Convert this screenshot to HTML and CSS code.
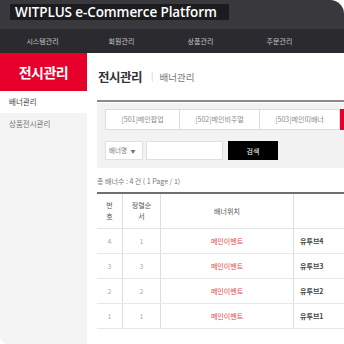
FILE: index.html
```html
<!DOCTYPE html>
<html>
<head>
  <meta charset="utf-8">
  <title>전시관리 - 배너관리</title>
  <link rel="stylesheet" href="styles.css">
</head>
<body>
<div class="frame">
  <div class="topbar">
    <div class="brand">WITPLUS e-Commerce Platform</div>
  </div>
  <div class="gnb">
    <a href="#">시스템관리</a>
    <a href="#">회원관리</a>
    <a href="#">상품관리</a>
    <a href="#">주문관리</a>
  </div>

  <div class="wrap">
    <div class="side">
      <div class="side-title">전시관리</div>
      <ul class="side-menu">
        <li class="on">배너관리</li>
        <li>상품전시관리</li>
      </ul>
    </div>

    <div class="main">
      <div class="page-title">
        <strong>전시관리</strong>
        <span class="bar">|</span>
        <span class="sub">배너관리</span>
      </div>

      <div class="search-box">
        <div class="tabs">
          <span class="tab">[501]메인팝업</span>
          <span class="tab">[502]메인비주얼</span>
          <span class="tab">[503]메인띠배너</span>
          <span class="tab red"></span>
        </div>
        <div class="search-row">
          <span class="select">배너명 <i>▼</i></span>
          <span class="input"></span>
          <button class="btn-search">검색</button>
        </div>
      </div>

      <div class="total">총 배너수 : 4 건 ( 1 Page / 1)</div>

      <table class="list">
        <thead>
          <tr>
            <th class="c1">번<br>호</th>
            <th class="c2">정렬순<br>서</th>
            <th class="c3">배너위치</th>
            <th class="c4"></th>
          </tr>
        </thead>
        <tbody>
          <tr><td>4</td><td>1</td><td class="pos">메인이벤트</td><td class="name">유투브4</td></tr>
          <tr><td>3</td><td>3</td><td class="pos">메인이벤트</td><td class="name">유투브3</td></tr>
          <tr><td>2</td><td>2</td><td class="pos">메인이벤트</td><td class="name">유투브2</td></tr>
          <tr><td>1</td><td>1</td><td class="pos">메인이벤트</td><td class="name">유투브1</td></tr>
        </tbody>
      </table>
    </div>
  </div>
</div>
</body>
</html>
```

FILE: styles.css
```css
html, body {
  margin: 0;
  padding: 0;
  background: #fff;
}

.frame {
  width: 344px;
  height: 344px;
  overflow: hidden;
  border-radius: 0 14px 0 8px;
  display: flex;
  flex-direction: column;
  font-family: "Noto Sans CJK KR", "Noto Sans", sans-serif;
}

.topbar {
  height: 29px;
  background: #38383d;
  padding: 4px 0 0 10px;
  box-sizing: border-box;
  flex: none;
}
.brand {
  width: 219px;
  height: 16px;
  background: #1c1c1e;
  color: #fff;
  font-family: "Open Sans", "Noto Sans", sans-serif;
  font-weight: 600;
  font-size: 13.5px;
  line-height: 16px;
  padding-left: 5px;
  box-sizing: border-box;
  letter-spacing: -0.1px;
}

.gnb {
  height: 24px;
  background: #2b2b2f;
  display: flex;
  align-items: center;
  padding-left: 3px;
  flex: none;
}
.gnb a {
  width: 79px;
  text-align: center;
  color: #c4c4c8;
  font-size: 7px;
  text-decoration: none;
}

.wrap {
  flex: 1;
  display: flex;
}

.side {
  width: 87px;
  flex: none;
  background: #f3f3f3;
}
.side-title {
  height: 38px;
  background: #e6002b;
  color: #fff;
  font-size: 14px;
  font-weight: bold;
  text-align: center;
  line-height: 38px;
  letter-spacing: -0.5px;
}
.side-menu {
  list-style: none;
  margin: 0;
  padding: 0;
}
.side-menu li {
  height: 22px;
  line-height: 22px;
  padding-left: 9px;
  font-size: 7.5px;
  color: #777;
}
.side-menu li.on {
  background: #fff;
  color: #444;
}

.main {
  margin-left: 10px;
  width: 330px;
  flex: none;
}

.page-title {
  height: 49px;
  display: flex;
  align-items: center;
  padding-left: 1px;
  border-bottom: 2px solid #8a8a8a;
  box-sizing: border-box;
}
.page-title strong {
  font-size: 12.5px;
  color: #333;
  letter-spacing: -0.5px;
}
.page-title .bar {
  color: #ccc;
  font-size: 9px;
  margin: 0 6px 0 9px;
}
.page-title .sub {
  font-size: 9.5px;
  color: #777;
}

.search-box {
  margin-top: 1px;
  background: #f2f2f2;
  padding: 6px 0 8px 8px;
}
.tabs {
  display: flex;
}
.tab {
  width: 80px;
  height: 21px;
  box-sizing: border-box;
  flex: none;
  background: #fff;
  border: 1px solid #dcdcdc;
  border-left: none;
  font-size: 7px;
  color: #8a8a8a;
  text-align: center;
  line-height: 19px;
}
.tab:first-child {
  width: 75px;
  border-left: 1px solid #dcdcdc;
}
.tab.red {
  background: #e6002b;
  border-color: #e6002b;
}

.search-row {
  display: flex;
  margin-top: 11px;
  height: 19px;
}
.select {
  width: 38px;
  background: #fff;
  border: 1px solid #e0e0e0;
  box-sizing: border-box;
  font-size: 6.5px;
  color: #777;
  line-height: 17px;
  padding-left: 3px;
}
.select i {
  font-style: normal;
  font-size: 5px;
  margin-left: 2px;
}
.input {
  width: 77px;
  margin-left: 3px;
  background: #fff;
  border: 1px solid #e0e0e0;
  box-sizing: border-box;
}
.btn-search {
  width: 50px;
  margin-left: 5px;
  height: 19px;
  background: #000;
  color: #fff;
  border: none;
  padding: 0;
  font-family: inherit;
  font-size: 7px;
}

.total {
  margin-top: 8px;
  font-size: 7px;
  color: #777;
  height: 16px;
  line-height: 10px;
}

.list {
  border-collapse: collapse;
  border-top: 2px solid #6f6f6f;
  table-layout: fixed;
  width: 330px;
}
.list th {
  height: 34px;
  padding: 0;
  font-size: 7px;
  font-weight: normal;
  color: #555;
  line-height: 11px;
  border-left: 1px solid #dedede;
  border-bottom: 1px solid #e4e4e4;
}
.list th:first-child, .list td:first-child {
  border-left: none;
}
.list .c1 { width: 25px; }
.list .c2 { width: 37px; }
.list .c3 { width: 132px; }
.list td {
  height: 24px;
  font-size: 7px;
  color: #aaa;
  text-align: center;
  border-left: 1px solid #dedede;
  border-bottom: 1px solid #e8e8e8;
  padding: 0;
}
.list td.pos {
  color: #e24a4a;
}
.list td.name {
  text-align: left;
  padding-left: 6px;
  color: #444;
  font-weight: bold;
}
```
